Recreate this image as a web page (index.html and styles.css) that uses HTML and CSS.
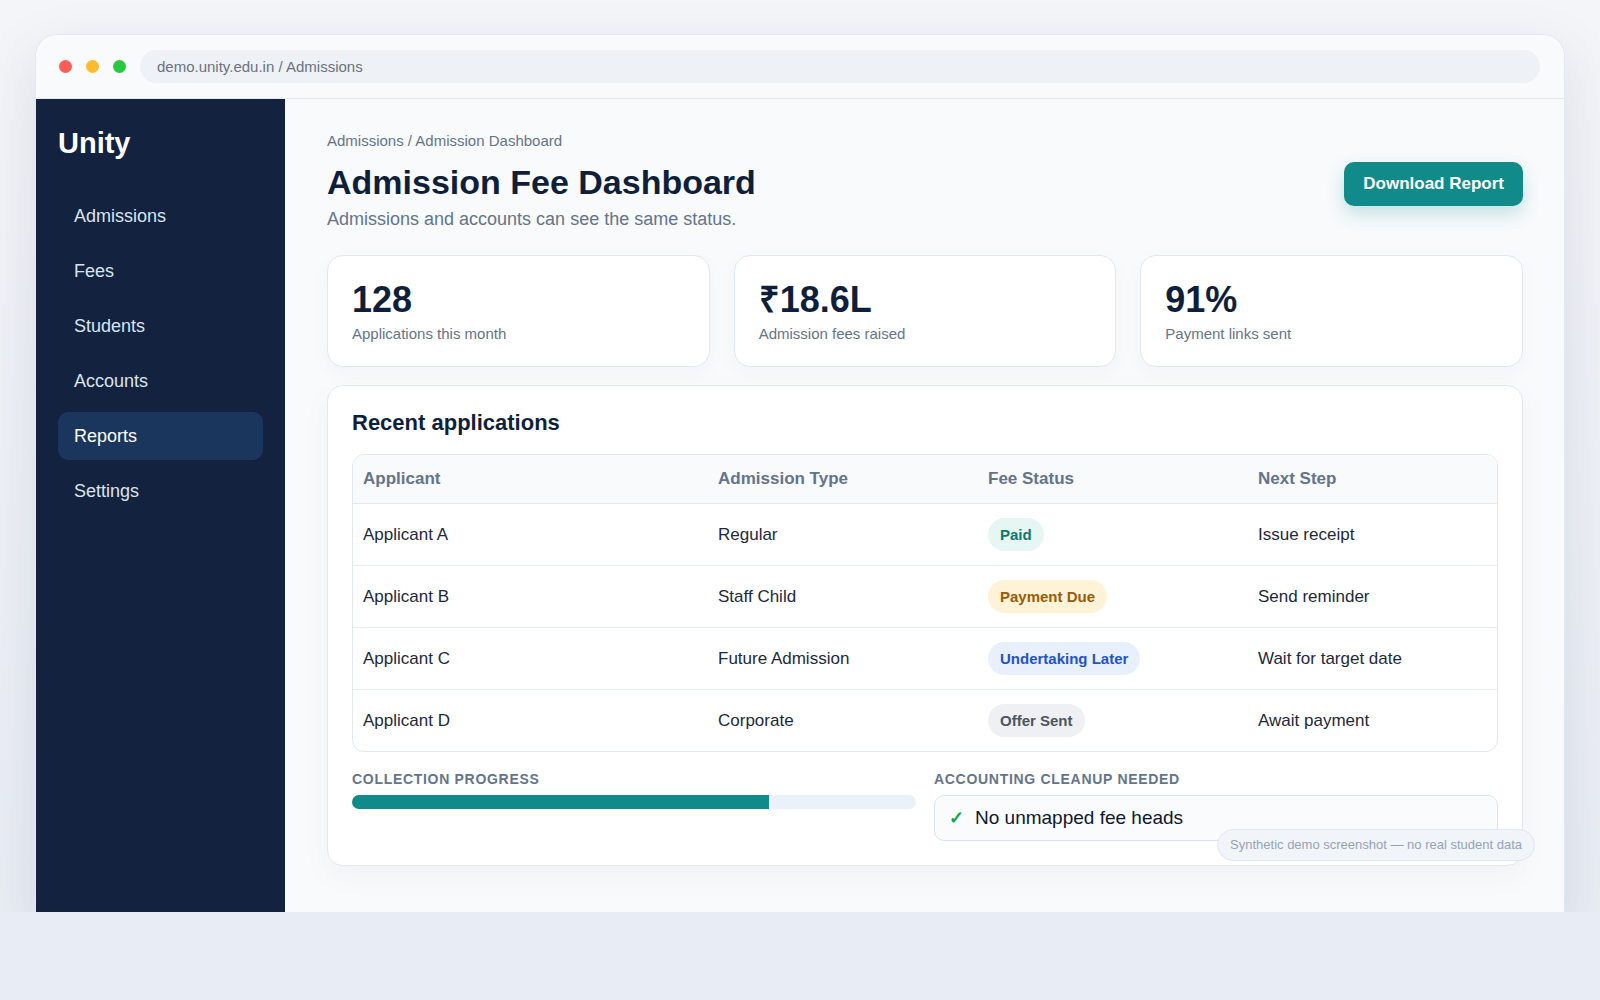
FILE: index.html
```html
<!DOCTYPE html>
<html lang="en">
<head>
    <meta charset="UTF-8">
    <meta name="viewport" content="width=device-width, initial-scale=1.0">
    <title>Unity - Admission Fee Dashboard</title>
    <link rel="stylesheet" href="styles.css">
</head>
<body>
    <div class="stage">
        <div class="window">
            <div class="titlebar">
                <span class="dot red"></span>
                <span class="dot yellow"></span>
                <span class="dot green"></span>
                <div class="address">demo.unity.edu.in / Admissions</div>
            </div>
            <div class="app">
                <aside class="sidebar">
                    <div class="brand">Unity</div>
                    <nav class="nav">
                        <a class="nav-item">Admissions</a>
                        <a class="nav-item">Fees</a>
                        <a class="nav-item">Students</a>
                        <a class="nav-item">Accounts</a>
                        <a class="nav-item active">Reports</a>
                        <a class="nav-item">Settings</a>
                    </nav>
                </aside>
                <main class="main">
                    <div class="page-head">
                        <div>
                            <div class="crumbs">Admissions / Admission Dashboard</div>
                            <h1>Admission Fee Dashboard</h1>
                            <p class="subtitle">Admissions and accounts can see the same status.</p>
                        </div>
                        <button class="btn-primary">Download Report</button>
                    </div>

                    <div class="stats">
                        <div class="stat-card">
                            <div class="stat-value">128</div>
                            <div class="stat-label">Applications this month</div>
                        </div>
                        <div class="stat-card">
                            <div class="stat-value">₹18.6L</div>
                            <div class="stat-label">Admission fees raised</div>
                        </div>
                        <div class="stat-card">
                            <div class="stat-value">91%</div>
                            <div class="stat-label">Payment links sent</div>
                        </div>
                    </div>

                    <section class="panel">
                        <h2>Recent applications</h2>
                        <div class="table-wrap">
                            <table>
                                <thead>
                                    <tr>
                                        <th class="col-1">Applicant</th>
                                        <th class="col-2">Admission Type</th>
                                        <th class="col-3">Fee Status</th>
                                        <th>Next Step</th>
                                    </tr>
                                </thead>
                                <tbody>
                                    <tr>
                                        <td>Applicant A</td>
                                        <td>Regular</td>
                                        <td><span class="pill paid">Paid</span></td>
                                        <td>Issue receipt</td>
                                    </tr>
                                    <tr>
                                        <td>Applicant B</td>
                                        <td>Staff Child</td>
                                        <td><span class="pill due">Payment Due</span></td>
                                        <td>Send reminder</td>
                                    </tr>
                                    <tr>
                                        <td>Applicant C</td>
                                        <td>Future Admission</td>
                                        <td><span class="pill later">Undertaking Later</span></td>
                                        <td>Wait for target date</td>
                                    </tr>
                                    <tr>
                                        <td>Applicant D</td>
                                        <td>Corporate</td>
                                        <td><span class="pill offer">Offer Sent</span></td>
                                        <td>Await payment</td>
                                    </tr>
                                </tbody>
                            </table>
                        </div>

                        <div class="panel-foot">
                            <div>
                                <div class="eyebrow">Collection progress</div>
                                <div class="progress"><div class="progress-fill" style="width: 74%"></div></div>
                            </div>
                            <div>
                                <div class="eyebrow">Accounting cleanup needed</div>
                                <div class="check-box"><span class="tick">✓</span>No unmapped fee heads</div>
                            </div>
                        </div>
                    </section>
                </main>
            </div>
            <div class="demo-note">Synthetic demo screenshot — no real student data</div>
        </div>
    </div>
</body>
</html>
```

FILE: styles.css
```css
html {
    background: #e8ecf4;
}
body {
    margin: 0;
    font-family: "Liberation Sans", Arial, sans-serif;
    color: #0f1f3a;
}
.stage {
    height: 912px;
    padding: 34px 35px 0 35px;
    box-sizing: border-box;
    background: linear-gradient(180deg, #f3f5f9 0%, #e9edf4 100%);
}
.window {
    position: relative;
    height: 878px;
    background: #f8fafc;
    border: 1px solid #e2e8f0;
    border-bottom: none;
    border-radius: 22px 22px 0 0;
    box-shadow: 0 20px 60px rgba(15, 31, 58, 0.10);
    display: flex;
    flex-direction: column;
    overflow: hidden;
}
.titlebar {
    height: 63px;
    flex: none;
    display: flex;
    align-items: center;
    gap: 14px;
    padding: 0 24px 0 23px;
    border-bottom: 1px solid #e2e8f0;
    background: #f8fafc;
}
.dot {
    width: 13px;
    height: 13px;
    border-radius: 50%;
}
.dot.red { background: #ff5f57; }
.dot.yellow { background: #febc2e; }
.dot.green { background: #28c840; }
.address {
    flex: 1;
    height: 33px;
    line-height: 33px;
    padding: 0 17px;
    border-radius: 17px;
    background: #eef1f6;
    color: #6b7280;
    font-size: 15px;
}
.app {
    flex: 1;
    display: flex;
    min-height: 0;
}
.sidebar {
    width: 249px;
    flex: none;
    background: #12223f;
    padding: 24px 22px;
    box-sizing: border-box;
}
.brand {
    color: #ffffff;
    font-size: 29px;
    font-weight: 700;
    line-height: 40px;
    margin-bottom: 29px;
}
.nav {
    display: flex;
    flex-direction: column;
    gap: 7px;
}
.nav-item {
    display: block;
    height: 48px;
    line-height: 48px;
    padding: 0 16px;
    border-radius: 10px;
    color: #dbe4f0;
    font-size: 18px;
}
.nav-item.active {
    background: #1b365d;
    color: #ffffff;
}
.main {
    flex: 1;
    padding: 33px 41px 0 42px;
}
.page-head {
    display: flex;
    justify-content: space-between;
    align-items: center;
}
.crumbs {
    font-size: 15px;
    line-height: 18px;
    color: #64748b;
}
h1 {
    margin: 12px 0 0;
    font-size: 34px;
    line-height: 40px;
    font-weight: 700;
    color: #0f1f3a;
}
.subtitle {
    margin: 6px 0 0;
    font-size: 18px;
    line-height: 22px;
    color: #64748b;
}
.btn-primary {
    background: #118a8a;
    color: #ffffff;
    border: none;
    border-radius: 10px;
    height: 44px;
    padding: 0 19px;
    font-family: inherit;
    font-size: 17px;
    font-weight: 700;
    box-shadow: 0 8px 18px rgba(17, 138, 138, 0.22);
    margin-top: 6px;
}
.stats {
    display: grid;
    grid-template-columns: repeat(3, 1fr);
    gap: 24px;
    margin-top: 25px;
}
.stat-card {
    background: #ffffff;
    border: 1px solid #e2e8f0;
    border-radius: 16px;
    padding: 23px 24px 23px;
    box-shadow: 0 6px 20px rgba(15, 31, 58, 0.03);
}
.stat-value {
    font-size: 36px;
    line-height: 42px;
    font-weight: 700;
    color: #0f1f3a;
}
.stat-label {
    margin-top: 4px;
    font-size: 15px;
    line-height: 18px;
    color: #64748b;
}
.panel {
    margin-top: 18px;
    background: #ffffff;
    border: 1px solid #e2e8f0;
    border-radius: 16px;
    padding: 24px 24px 24px;
    box-shadow: 0 10px 30px rgba(15, 31, 58, 0.04);
}
h2 {
    margin: 0;
    font-size: 22px;
    line-height: 26px;
    font-weight: 700;
    color: #0f1f3a;
}
.table-wrap {
    margin-top: 18px;
    border: 1px solid #e2e8f0;
    border-radius: 12px;
    overflow: hidden;
}
table {
    width: 100%;
    border-collapse: collapse;
    table-layout: fixed;
}
th {
    background: #f8fafc;
    text-align: left;
    height: 48px;
    padding: 0 10px;
    font-size: 17px;
    font-weight: 700;
    color: #64748b;
    border-bottom: 1px solid #e2e8f0;
}
.col-1 { width: 335px; }
.col-2 { width: 250px; }
.col-3 { width: 250px; }
td {
    height: 61px;
    padding: 0 10px;
    font-size: 17px;
    color: #1e293b;
    border-bottom: 1px solid #e8edf3;
}
tbody tr:last-child td {
    border-bottom: none;
}
.pill {
    display: inline-block;
    height: 33px;
    line-height: 33px;
    padding: 0 12px;
    border-radius: 17px;
    font-size: 15px;
    font-weight: 700;
}
.pill.paid { background: #e6f6f3; color: #0f766e; }
.pill.due { background: #fef3d7; color: #9a5b06; }
.pill.later { background: #e8f0fe; color: #2453c7; }
.pill.offer { background: #eef0f4; color: #4b5563; }
.panel-foot {
    display: grid;
    grid-template-columns: 1fr 1fr;
    gap: 18px;
    margin-top: 19px;
}
.eyebrow {
    font-size: 14px;
    line-height: 17px;
    font-weight: 700;
    text-transform: uppercase;
    letter-spacing: 0.7px;
    color: #64748b;
    margin-bottom: 7px;
}
.progress {
    height: 14px;
    border-radius: 7px;
    background: #eaf1f8;
    overflow: hidden;
}
.progress-fill {
    height: 100%;
    background: #118a8a;
}
.check-box {
    height: 44px;
    line-height: 44px;
    border: 1px solid #dbe3ee;
    border-radius: 10px;
    background: #f9fbfd;
    padding: 0 14px;
    font-size: 19px;
    color: #0f172a;
}
.tick {
    color: #16a34a;
    font-weight: 700;
    font-size: 18px;
    margin-right: 11px;
}
.demo-note {
    position: absolute;
    right: 29px;
    bottom: 52px;
    height: 30px;
    line-height: 30px;
    padding: 0 12px;
    border: 1px solid #e2e8f0;
    border-radius: 16px;
    background: #f1f5f9;
    color: #94a3b8;
    font-size: 13px;
}
```
